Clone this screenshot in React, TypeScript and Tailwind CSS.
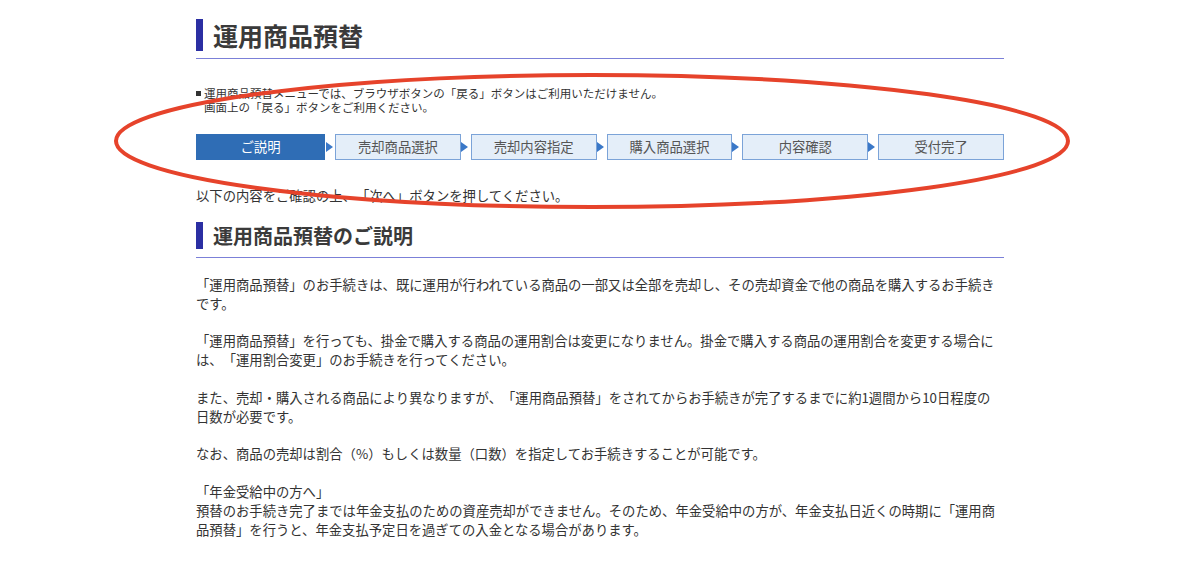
const steps = ["ご説明", "売却商品選択", "売却内容指定", "購入商品選択", "内容確認", "受付完了"];

const paragraphs = [
  ["「運用商品預替」のお手続きは、既に運用が行われている商品の一部又は全部を売却し、その売却資金で他の商品を購入するお手続きです。"],
  ["「運用商品預替」を行っても、掛金で購入する商品の運用割合は変更になりません。掛金で購入する商品の運用割合を変更する場合には、「運用割合変更」のお手続きを行ってください。"],
  ["また、売却・購入される商品により異なりますが、「運用商品預替」をされてからお手続きが完了するまでに約1週間から10日程度の", "日数が必要です。"],
  ["なお、商品の売却は割合（%）もしくは数量（口数）を指定してお手続きすることが可能です。"],
];

export default function App() {
  return (
    <div
      className="relative h-[568px] w-full overflow-hidden bg-white text-[#333] [text-spacing-trim:space-all]"
      style={{ fontFamily: '"Noto Sans CJK JP", "Noto Sans", sans-serif' }}
    >
      <div className="mx-auto w-[808px]">
        {/* page title */}
        <div className="border-b border-[#7b80d8] pb-[7px] pt-[19px]">
          <h1 className="border-l-[7px] border-[#2b2fa3] pl-[10px] text-[25px] font-bold leading-[32px] text-[#3a3a3a]">
            運用商品預替
          </h1>
        </div>

        {/* note */}
        <div className="mt-[27px] flex text-[11.5px] leading-[14px] text-[#333]">
          <span className="mr-[3px] mt-[5px] inline-block h-[5px] w-[5px] shrink-0 bg-[#333]" />
          <p>
            運用商品預替メニューでは、ブラウザボタンの「戻る」ボタンはご利用いただけません。
            <br />
            画面上の「戻る」ボタンをご利用ください。
          </p>
        </div>

        {/* steps */}
        <div className="mt-[20px] flex gap-[10px]">
          {steps.map((label, i) => (
            <div
              key={label}
              className={`relative flex h-[26px] items-center justify-center text-[13.33px] ${
                i === 0
                  ? "w-[129px] bg-[#2f6db5] text-white"
                  : "flex-1 border border-[#7ba3d8] bg-[#e4eef9] text-[#555]"
              }`}
            >
              {label}
              {i < steps.length - 1 && (
                <span className="absolute left-[calc(100%+1px)] top-1/2 h-0 w-0 -translate-y-1/2 border-y-[5px] border-l-[7px] border-y-transparent border-l-[#3a78c8]" />
              )}
            </div>
          ))}
        </div>

        <p className="mt-[25.5px] text-[13.33px] leading-[19px]">以下の内容をご確認の上、「次へ」ボタンを押してください。</p>

        {/* section heading */}
        <div className="mt-[17.5px] border-b border-[#7b80d8] pb-[8px]">
          <h2 className="border-l-[7px] border-[#2b2fa3] pl-[10px] text-[20px] font-bold leading-[27px] text-[#3a3a3a]">
            運用商品預替のご説明
          </h2>
        </div>

        <div className="mt-[16.5px] text-[13.33px] leading-[19px]">
          {paragraphs.map((lines, i) => (
            <p key={i} className={i === 0 ? "" : "mt-[18.5px]"}>
              {lines[0]}
              {lines[1] && (
                <>
                  <br />
                  {lines[1]}
                </>
              )}
            </p>
          ))}
          <p className="mt-[18.5px]">
            「年金受給中の方へ」
            <br />
            預替のお手続き完了までは年金支払のための資産売却ができません。そのため、年金受給中の方が、年金支払日近くの時期に「運用商品預替」を行うと、年金支払予定日を過ぎての入金となる場合があります。
          </p>
        </div>
      </div>

      {/* red annotation ellipse */}
      <svg className="pointer-events-none absolute inset-0" width="1200" height="568" viewBox="0 0 1200 568">
        <ellipse cx="592" cy="141" rx="476" ry="66" fill="none" stroke="#e6432b" strokeWidth="4" />
      </svg>
    </div>
  );
}
